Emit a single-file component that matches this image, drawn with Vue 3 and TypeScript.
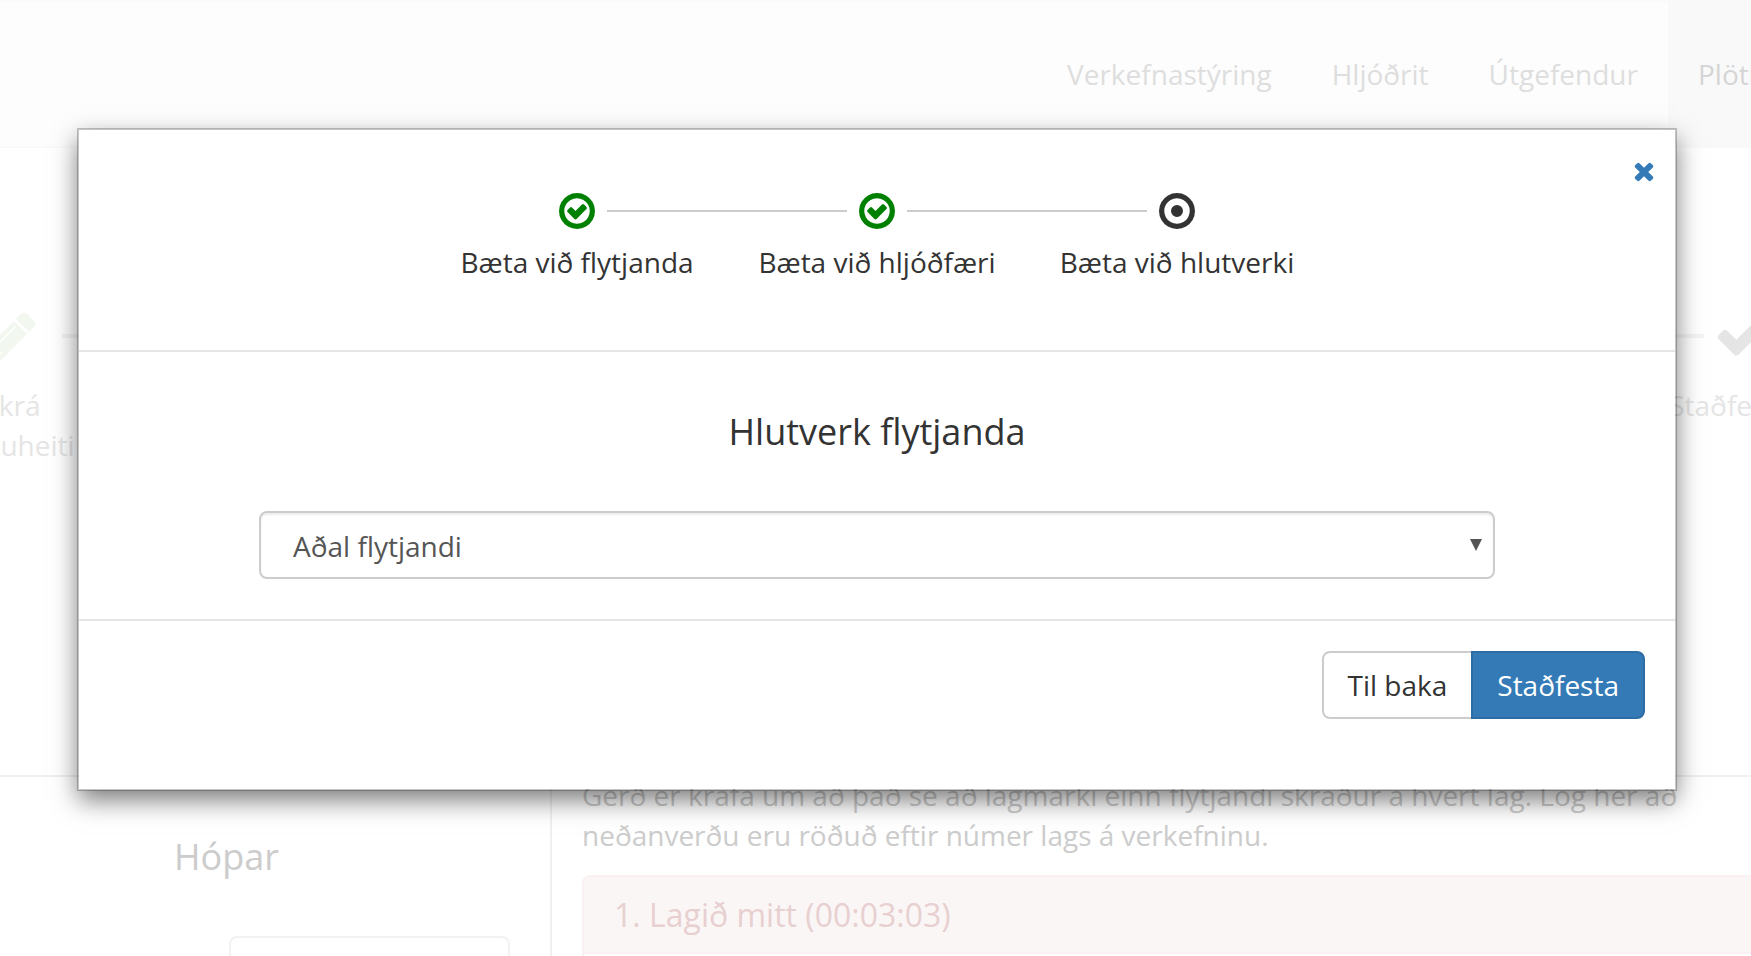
<script setup lang="ts">
import { ref } from 'vue'

interface Step {
  label: string
  done: boolean
}

const navItems: { label: string; active: boolean }[] = [
  { label: 'Verkefnastýring', active: false },
  { label: 'Hljóðrit', active: false },
  { label: 'Útgefendur', active: false },
  { label: 'Plötur', active: true },
]

const steps: Step[] = [
  { label: 'Bæta við flytjanda', done: true },
  { label: 'Bæta við hljóðfæri', done: true },
  { label: 'Bæta við hlutverki', done: false },
]

const roles: string[] = ['Aðal flytjandi']
const role = ref<string>(roles[0])
</script>

<template>
  <div class="page">
    <header class="nav">
      <a v-for="item in navItems" :key="item.label" class="nav-item" :class="{ active: item.active }">{{ item.label }}</a>
    </header>

    <section class="progress">
      <div class="stage">
        <svg class="stage-icon pencil" viewBox="0 0 1792 1792"><path d="M491 1536l91-91-235-235-91 91v107h128v128h107zm523-928q0-22-22-22-10 0-17 7l-542 542q-7 7-7 17 0 22 22 22 10 0 17-7l542-542q7-7 7-17zm-54-192l416 416-832 832h-416v-416zm683 96q0 53-37 90l-166 166-416-416 166-165q36-38 90-38 53 0 91 38l235 234q37 39 37 91z" /></svg>
        <span class="stage-label">Skrá<br />plötuheiti</span>
      </div>
      <div class="stage-line"></div>
      <div class="stage">
        <svg class="stage-icon" viewBox="0 0 1792 1792"><path d="M1671 566q0 40-28 68l-724 724-136 136q-28 28-68 28t-68-28l-136-136-362-362q-28-28-28-68t28-68l136-136q28-28 68-28t68 28l294 295 656-657q28-28 68-28t68 28l136 136q28 28 28 68z" /></svg>
        <span class="stage-label">Staðfesting</span>
      </div>
    </section>

    <main class="content">
      <aside class="groups">
        <h2>Hópar</h2>
        <div class="group-box"></div>
      </aside>
      <section class="songs">
        <p>Gerð er krafa um að það sé að lágmarki einn flytjandi skráður á hvert lag. Lög hér að<br />neðanverðu eru röðuð eftir númer lags á verkefninu.</p>
        <div class="panel">
          <div class="panel-heading">1. Lagið mitt (00:03:03)</div>
        </div>
      </section>
    </main>

    <div class="modal" role="dialog">
      <div class="modal-header">
        <a class="close">
          <svg viewBox="0 0 1792 1792"><path d="M1490 1322q0 40-28 68l-136 136q-28 28-68 28t-68-28l-294-294-294 294q-28 28-68 28t-68-28l-136-136q-28-28-28-68t28-68l294-294-294-294q-28-28-28-68t28-68l136-136q28-28 68-28t68 28l294 294 294-294q28-28 68-28t68 28l136 136q28 28 28 68t-28 68l-294 294 294 294q28 28 28 68z" /></svg>
        </a>
        <ol class="steps">
          <li v-for="step in steps" :key="step.label" class="step" :class="{ done: step.done }">
            <div class="step-track">
              <svg viewBox="0 0 1792 1792">
                <path v-if="step.done" d="M1299 813l-422 422q-19 19-45 19t-45-19l-294-294q-19-19-19-45t19-45l102-102q19-19 45-19t45 19l147 147 275-275q19-19 45-19t45 19l102 102q19 19 19 45t-19 45zm141 83q0-148-73-273t-198-198-273-73-273 73-198 198-73 273 73 273 198 198 273 73 273-73 198-198 73-273zm224 0q0 209-103 385.5t-279.5 279.5-385.5 103-385.5-103-279.5-279.5-103-385.5 103-385.5 279.5-279.5 385.5-103 385.5 103 279.5 279.5 103 385.5z" />
                <path v-else d="M1152 896q0 106-75 181t-181 75-181-75-75-181 75-181 181-75 181 75 75 181zm-256-544q-148 0-273 73t-198 198-73 273 73 273 198 198 273 73 273-73 198-198 73-273-73-273-198-198-273-73zm768 544q0 209-103 385.5t-279.5 279.5-385.5 103-385.5-103-279.5-279.5-103-385.5 103-385.5 279.5-279.5 385.5-103 385.5 103 279.5 279.5 103 385.5z" />
              </svg>
            </div>
            <span>{{ step.label }}</span>
          </li>
        </ol>
      </div>
      <div class="modal-body">
        <h3>Hlutverk flytjanda</h3>
        <div class="select-wrap">
          <select v-model="role">
            <option v-for="r in roles" :key="r" :value="r">{{ r }}</option>
          </select>
          <svg class="caret" viewBox="0 0 12 12"><path d="M0 0h12L6 12z" /></svg>
        </div>
      </div>
      <div class="modal-footer">
        <button class="btn back" type="button">Til baka</button>
        <button class="btn primary" type="button">Staðfesta</button>
      </div>
    </div>
  </div>
</template>

<style>
body {
  margin: 0;
  background: #fff;
  overflow: hidden;
}
</style>

<style scoped>
* {
  box-sizing: border-box;
}
.page {
  position: relative;
  width: 1751px;
  height: 956px;
  overflow: hidden;
  font-family: 'Open Sans', 'Noto Sans', sans-serif;
  font-size: 28px;
  line-height: 40px;
  color: #333;
}
svg {
  display: block;
  fill: currentColor;
}
.nav {
  display: flex;
  width: 1847px;
  height: 148px;
  padding-left: 1037px;
  background: #fdfdfd;
  border-top: 2px solid #fafafa;
  border-bottom: 2px solid #fafafa;
}
.nav-item {
  padding: 52px 30px 0;
  color: #dedede;
  white-space: nowrap;
}
.nav-item.active {
  flex: 1;
  margin: -2px 0;
  padding-top: 54px;
  background: #f9f9f9;
  color: #d5d5d5;
}
.progress {
  display: flex;
  align-items: flex-start;
  width: 1930px;
  height: 627px;
  margin-left: -88px;
  padding-top: 160px;
  color: #e5e5e5;
}
.stage {
  display: flex;
  flex-direction: column;
  align-items: center;
  gap: 21px;
  width: 200px;
  flex: none;
  text-align: center;
}
.stage-icon {
  width: 56px;
  height: 56px;
}
.pencil {
  color: #f2f8f0;
}
.stage-line {
  flex: 1;
  height: 4px;
  margin: 26px -62px 0 -50px;
  background: #f4f4f4;
}
.content {
  display: flex;
  width: 1900px;
  height: 220px;
  border-top: 2px solid #f0f0f0;
}
.groups {
  width: 552px;
  flex: none;
  border-right: 2px solid #f0f0f0;
}
h2,
h3 {
  margin: 0;
  font-size: 36px;
  font-weight: 400;
}
.groups h2 {
  margin: 60px 0 0 174px;
  color: #ccc;
}
.group-box {
  width: 281px;
  height: 68px;
  margin: 59px 0 0 229px;
  border: 2px solid #f2f2f2;
  border-radius: 8px;
}
.songs {
  flex: 1;
  padding: 0 0 0 30px;
}
.songs p {
  margin: -2px 0 0;
  color: #ccc;
  white-space: nowrap;
}
.panel {
  height: 200px;
  margin-top: 20px;
  border: 2px solid #faf1f2;
  border-radius: 8px;
  overflow: hidden;
}
.panel-heading {
  height: 77px;
  padding: 18px 30px;
  background: #faf6f6;
  border-bottom: 2px solid #faf1f2;
  font-size: 32px;
  color: #e8d0d0;
}
.modal {
  position: absolute;
  z-index: 1;
  left: 77px;
  top: 128px;
  width: 1600px;
  height: 663px;
  background: #fff;
  background-clip: padding-box;
  border: 2px solid rgba(0, 0, 0, 0.22);
}
/* The shadow starts halfway through the translucent border. */
.modal::before {
  content: '';
  position: absolute;
  z-index: -1;
  inset: -1px;
  box-shadow: 0 10px 24px rgba(0, 0, 0, 0.52);
  pointer-events: none;
}
.modal-header {
  position: relative;
  height: 222px;
  padding-top: 60px;
  border-bottom: 2px solid #e5e5e5;
}
.close {
  position: absolute;
  right: 17px;
  top: 27px;
  color: #337ab7;
}
.close svg {
  width: 28px;
  height: 28px;
}
.steps {
  display: flex;
  justify-content: center;
  margin: 0;
  padding: 0;
  list-style: none;
}
.step {
  display: flex;
  flex-direction: column;
  align-items: center;
  gap: 10px;
  width: 300px;
}
.step-track {
  display: flex;
  align-items: center;
  justify-content: center;
  gap: 9px;
  width: 100%;
  color: #333;
}
.done .step-track {
  color: #008000;
}
.step-track svg {
  width: 42px;
  height: 42px;
  flex: none;
}
.step-track::before,
.step-track::after {
  content: '';
  flex: 1;
  height: 2px;
  background: #ccc;
}
.step:first-child .step-track::before,
.step:last-child .step-track::after {
  background: none;
}
.modal-body {
  display: flex;
  flex-direction: column;
  align-items: center;
  gap: 59px;
  height: 269px;
  padding-top: 60px;
  border-bottom: 2px solid #e5e5e5;
}
.select-wrap {
  position: relative;
  width: 1236px;
}
select {
  display: block;
  appearance: none;
  width: 100%;
  height: 68px;
  padding: 2px 32px 0;
  border: 2px solid #ccc;
  border-radius: 8px;
  background: #fff;
  box-shadow: inset 0 2px 2px rgba(0, 0, 0, 0.075);
  font: inherit;
  color: #555;
}
.caret {
  position: absolute;
  right: 13px;
  top: 28px;
  width: 12px;
  height: 12px;
  color: #555;
}
.modal-footer {
  display: flex;
  justify-content: flex-end;
  padding: 30px;
}
.btn {
  height: 68px;
  padding: 0 24px;
  border: 2px solid #ccc;
  background: #fff;
  font: inherit;
  color: #333;
}
.back {
  padding-left: 23px;
  border-radius: 8px 0 0 8px;
}
.primary {
  margin-left: -2px;
  border-color: #2e6da4;
  border-radius: 0 8px 8px 0;
  background: #337ab7;
  color: #fff;
}
</style>
